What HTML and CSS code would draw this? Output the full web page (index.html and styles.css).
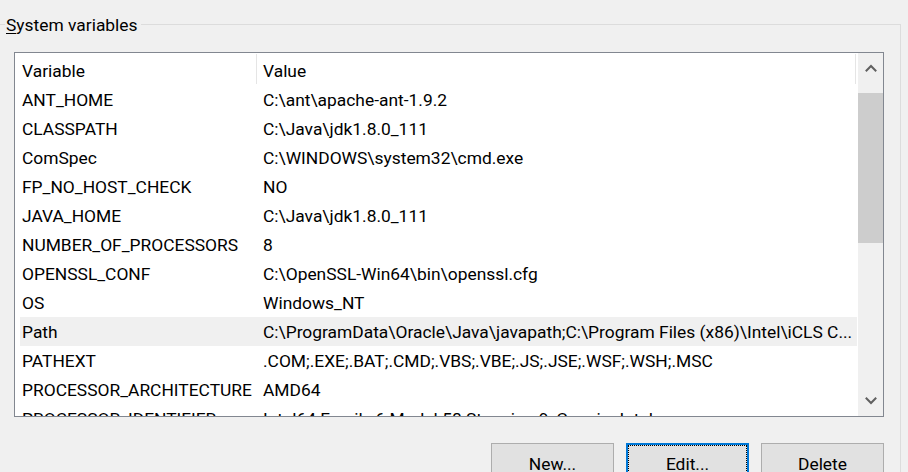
FILE: index.html
```html
<!DOCTYPE html>
<html>
<head>
<meta charset="utf-8">
<link rel="stylesheet" href="styles.css">
</head>
<body>
<div class="group">
  <div class="group-label"><u>S</u>ystem variables</div>
  <div class="listview">
    <div class="lv-content">
      <div class="lv-header">
        <div class="hcell hcell-var">Variable</div>
        <div class="hsep"></div>
        <div class="hcell hcell-val">Value</div>
        <div class="hsep"></div>
      </div>
      <div class="lv-rows">
        <div class="row"><div class="c-var">ANT_HOME</div><div class="c-val">C:\ant\apache-ant-1.9.2</div></div>
        <div class="row"><div class="c-var">CLASSPATH</div><div class="c-val">C:\Java\jdk1.8.0_111</div></div>
        <div class="row"><div class="c-var">ComSpec</div><div class="c-val">C:\WINDOWS\system32\cmd.exe</div></div>
        <div class="row"><div class="c-var">FP_NO_HOST_CHECK</div><div class="c-val">NO</div></div>
        <div class="row"><div class="c-var">JAVA_HOME</div><div class="c-val">C:\Java\jdk1.8.0_111</div></div>
        <div class="row"><div class="c-var">NUMBER_OF_PROCESSORS</div><div class="c-val">8</div></div>
        <div class="row"><div class="c-var">OPENSSL_CONF</div><div class="c-val">C:\OpenSSL-Win64\bin\openssl.cfg</div></div>
        <div class="row"><div class="c-var">OS</div><div class="c-val">Windows_NT</div></div>
        <div class="row row-sel"><div class="c-var">Path</div><div class="c-val">C:\ProgramData\Oracle\Java\javapath;C:\Program Files (x86)\Intel\iCLS C...</div></div>
        <div class="row"><div class="c-var">PATHEXT</div><div class="c-val">.COM;.EXE;.BAT;.CMD;.VBS;.VBE;.JS;.JSE;.WSF;.WSH;.MSC</div></div>
        <div class="row"><div class="c-var">PROCESSOR_ARCHITECTURE</div><div class="c-val">AMD64</div></div>
        <div class="row"><div class="c-var">PROCESSOR_IDENTIFIER</div><div class="c-val">Intel64 Family 6 Model 58 Stepping 9, GenuineIntel</div></div>
      </div>
    </div>
    <div class="scrollbar">
      <div class="sb-btn">
        <svg width="12" height="8" viewBox="0 0 12 8"><path d="M0.8 7.2 L6 2 L11.2 7.2" fill="none" stroke="#606060" stroke-width="2"/></svg>
      </div>
      <div class="sb-thumb"></div>
      <div class="sb-track"></div>
      <div class="sb-btn">
        <svg width="12" height="8" viewBox="0 0 12 8"><path d="M0.8 0.8 L6 6 L11.2 0.8" fill="none" stroke="#606060" stroke-width="2"/></svg>
      </div>
    </div>
  </div>
  <div class="buttons">
    <button class="btn">New...</button>
    <button class="btn btn-focus">Edit...</button>
    <button class="btn">Delete</button>
  </div>
</div>
</body>
</html>
```
FILE: styles.css
```css
html, body {
  margin: 0;
  padding: 0;
}
body {
  width: 908px;
  height: 472px;
  overflow: hidden;
  background: #f0f0f0;
  font-family: Roboto, "Liberation Sans", sans-serif;
  font-size: 17.4px;
  color: #000;
}
.group {
  position: relative;
  margin-top: 24px;
  width: 901px;
  height: 460px;
  border-top: 1px solid #dcdcdc;
  border-right: 1px solid #dcdcdc;
  padding: 27px 0 0 14px;
  box-sizing: border-box;
}
.group-label {
  position: absolute;
  top: -10px;
  left: 5px;
  padding: 0 3px 0 1px;
  line-height: 20px;
  background: #f0f0f0;
  white-space: nowrap;
}
.group-label u {
  text-decoration-thickness: 1px;
  text-underline-offset: 2px;
}
.listview {
  display: flex;
  width: 870px;
  height: 365px;
  box-sizing: border-box;
  border: 1px solid #828790;
  background: #fff;
}
.lv-content {
  width: 842px;
  height: 363px;
  overflow: hidden;
}
.lv-header {
  display: flex;
  height: 32px;
}
.hcell {
  box-sizing: border-box;
  padding-top: 4px;
  line-height: 28px;
  white-space: nowrap;
}
.hcell-var {
  width: 241px;
  padding-left: 7px;
}
.hcell-val {
  width: 598px;
  padding-left: 6px;
}
.hsep {
  width: 1px;
  height: 30px;
  margin-top: 1px;
  background: #e5e5e5;
}
.lv-rows {
  padding-left: 5px;
}
.row {
  display: flex;
  width: 837px;
  height: 29px;
  line-height: 31px;
  white-space: nowrap;
  overflow: hidden;
}
.row-sel {
  background: #f0f0f0;
}
.c-var {
  width: 237px;
  padding-left: 2px;
  box-sizing: border-box;
  overflow: hidden;
}
.c-val {
  flex: 1;
  padding-left: 6px;
  overflow: hidden;
}
.scrollbar {
  display: flex;
  flex-direction: column;
  width: 25px;
  margin-left: 1px;
  background: #f0f0f0;
}
.sb-btn {
  height: 30px;
  display: flex;
  align-items: center;
  justify-content: center;
}
.sb-thumb {
  height: 150px;
  margin-top: 10px;
  background: #cdcdcd;
}
.sb-track {
  flex: 1;
}
.buttons {
  display: flex;
  justify-content: flex-end;
  gap: 12px;
  width: 870px;
  margin-top: 26px;
}
.btn {
  position: relative;
  width: 123px;
  height: 38px;
  box-sizing: border-box;
  border: 1px solid #adadad;
  background: #e1e1e1;
  padding: 3px 0 0 0;
  margin: 0;
  font-family: Roboto, "Liberation Sans", sans-serif;
  font-size: 17.4px;
  line-height: 34px;
  color: #000;
  text-align: center;
  vertical-align: top;
}
.btn-focus {
  border: 2px solid #0078d7;
  padding-top: 2px;
}
.btn-focus::after {
  content: "";
  position: absolute;
  inset: 0;
  border: 1px dotted #000;
}
```
